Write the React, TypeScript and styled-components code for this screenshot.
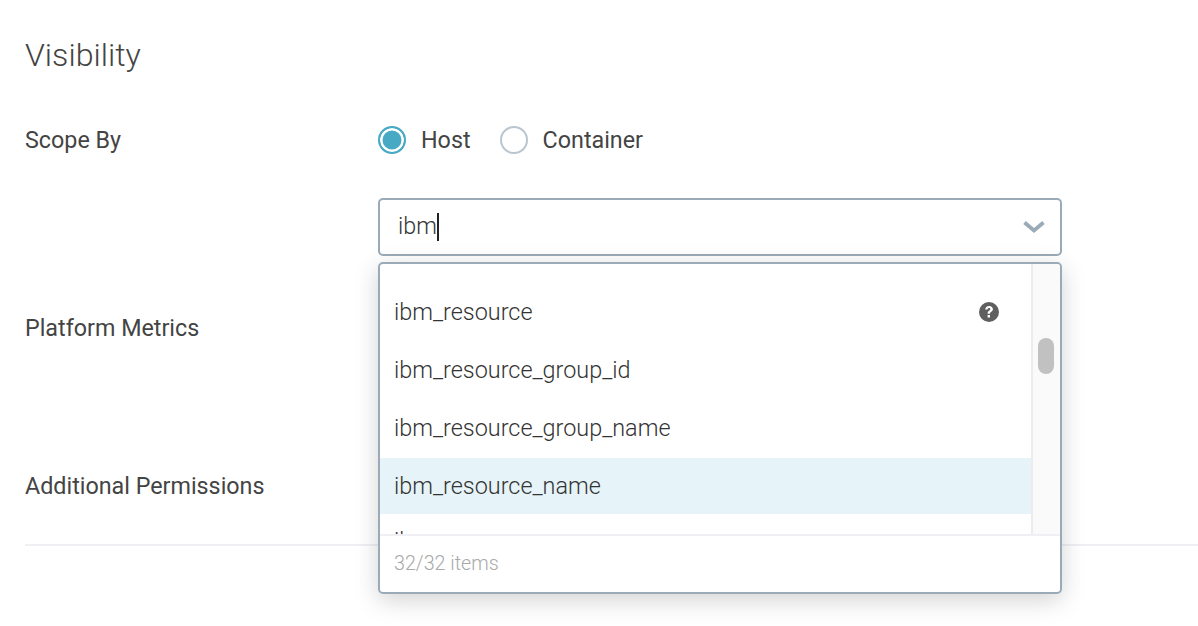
import React from "react";
import styled, { createGlobalStyle } from "styled-components";

const Global = createGlobalStyle`
  html, body { margin: 0; padding: 0; background: #fff; overflow: hidden; }
  body { font-family: Roboto, "Liberation Sans", sans-serif; color: #444; }
`;

const Page = styled.div`
  width: 1198px;
  height: 626px;
  box-sizing: border-box;
  padding: 35px 0 0 25px;
  position: relative;
`;

const Title = styled.h1`
  margin: 0 0 51px;
  font-size: 32.2px;
  line-height: 40px;
  font-weight: 300;
  color: #444;
`;

const Row = styled.div<{ $height: number }>`
  display: grid;
  grid-template-columns: 353px 684px;
  height: ${(p) => p.$height}px;
  align-items: start;
`;

const Label = styled.div`
  font-size: 23.3px;
  line-height: 28px;
  color: #444;
`;

const RadioGroup = styled.div`
  display: flex;
  align-items: center;
  height: 28px;
`;

const RadioCircle = styled.span<{ $checked?: boolean }>`
  width: 28px;
  height: 28px;
  box-sizing: border-box;
  border-radius: 50%;
  border: 2px solid ${(p) => (p.$checked ? "#48a9c5" : "#b9c6cf")};
  background: ${(p) => (p.$checked ? "#48a9c5" : "#fff")};
  box-shadow: ${(p) => (p.$checked ? "inset 0 0 0 2.5px #fff" : "none")};
  flex: none;
`;

const RadioText = styled.span`
  font-size: 23.3px;
  line-height: 28px;
  margin: 0 29px 0 15px;
  color: #444;
`;

const SelectField = styled.div`
  box-sizing: border-box;
  width: 100%;
  height: 58px;
  border: 2px solid #9aabb7;
  border-radius: 5px;
  display: flex;
  align-items: center;
  justify-content: space-between;
  padding: 0 15px 0 18px;
  background: #fff;
`;

const SelectValue = styled.span`
  font-size: 23.3px;
  font-weight: 300;
  color: #333;
  line-height: 26px;
  border-right: 2px solid #222;
  height: 28px;
  display: flex;
  align-items: flex-start;
`;

const Divider = styled.hr`
  margin: 0;
  border: 0;
  height: 2px;
  background: #f0eff4;
`;

const Dropdown = styled.div`
  position: absolute;
  left: 378px;
  top: 262px;
  width: 684px;
  height: 332px;
  box-sizing: border-box;
  border: 2px solid #9aabb7;
  border-radius: 5px;
  background: #fff;
  box-shadow: 0 6px 24px rgba(0, 0, 0, 0.18);
  display: flex;
  flex-direction: column;
  overflow: hidden;
`;

const ListArea = styled.div`
  display: flex;
  height: 270px;
  flex: none;
`;

const List = styled.div`
  flex: 1;
  overflow: hidden;
  padding-top: 20px;
  display: flex;
  flex-direction: column;
  gap: 2px;
`;

const Item = styled.div<{ $active?: boolean; $peek?: boolean }>`
  flex: none;
  height: 56px;
  box-sizing: border-box;
  display: flex;
  align-items: center;
  justify-content: space-between;
  padding: 0 32px 0 14px;
  margin-top: ${(p) => (p.$peek ? "-3px" : "0")};
  font-size: 23.4px;
  font-weight: 300;
  color: #333;
  background: ${(p) => (p.$active ? "#e6f3f8" : "transparent")};
`;

const ScrollTrack = styled.div`
  width: 29px;
  flex: none;
  box-sizing: border-box;
  background: #fafafa;
  border-left: 2px solid #ececec;
  padding: 74px 0 0 5px;
`;

const ScrollThumb = styled.div`
  width: 16px;
  height: 36px;
  border-radius: 8px;
  background: #c1c1c1;
`;

const Footer = styled.div`
  flex: none;
  box-sizing: border-box;
  border-top: 2px solid #f0eff4;
  padding: 0 14px 1px;
  height: 58px;
  display: flex;
  align-items: center;
  font-size: 19.7px;
  font-weight: 300;
  color: #a9a9a9;
`;

const HelpIcon = () => (
  <svg width="20" height="20" viewBox="0 0 20 20" aria-hidden="true">
    <circle cx="10" cy="10" r="10" fill="#5f5f5f" />
    <path d="M6.2 7.6C6.3 5.3 7.9 3.9 10.1 3.9c2.3 0 3.8 1.3 3.8 3.2 0 1.4-.7 2.2-1.8 2.9-.8.5-1.1.9-1.1 1.8H8.6c0-1.6.4-2.4 1.5-3.1.8-.5 1.2-.9 1.2-1.5 0-.8-.5-1.3-1.3-1.3-.9 0-1.4.6-1.5 1.7H6.2z" fill="#fff" />
    <rect x="8.6" y="13" width="2.4" height="2.5" fill="#fff" />
  </svg>
);

const Chevron = () => (
  <svg width="22" height="14" viewBox="0 0 22 14" aria-hidden="true">
    <path d="M1.5 2.5 L11 10.5 L20.5 2.5" fill="none" stroke="#9aabb7" strokeWidth="3.8" />
  </svg>
);

export default function App() {
  return (
    <Page>
      <Global />
      <Title>Visibility</Title>
      <Row $height={72}>
        <Label>Scope By</Label>
        <RadioGroup>
          <RadioCircle $checked />
          <RadioText>Host</RadioText>
          <RadioCircle />
          <RadioText>Container</RadioText>
        </RadioGroup>
      </Row>
      <Row $height={116}>
        <span />
        <SelectField>
          <SelectValue>ibm</SelectValue>
          <Chevron />
        </SelectField>
      </Row>
      <Row $height={158}>
        <Label>Platform Metrics</Label>
      </Row>
      <Row $height={72}>
        <Label>Additional Permissions</Label>
      </Row>
      <Divider />
      <Dropdown>
        <ListArea>
          <List>
            <Item>
              ibm_resource
              <HelpIcon />
            </Item>
            <Item>ibm_resource_group_id</Item>
            <Item>ibm_resource_group_name</Item>
            <Item $active>ibm_resource_name</Item>
            <Item $peek>ibm_scope</Item>
          </List>
          <ScrollTrack>
            <ScrollThumb />
          </ScrollTrack>
        </ListArea>
        <Footer>32/32 items</Footer>
      </Dropdown>
    </Page>
  );
}
